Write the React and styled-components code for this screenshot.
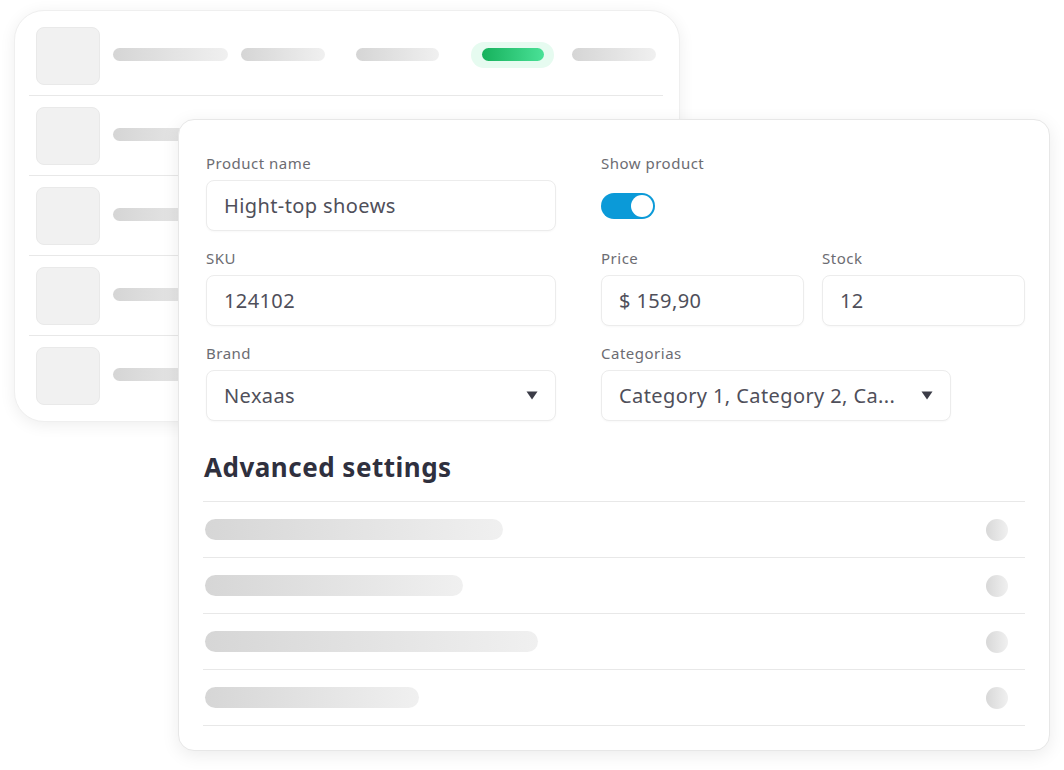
import { styled, createGlobalStyle } from "styled-components";

const GlobalStyle = createGlobalStyle`
    html, body {
        margin: 0;
        padding: 0;
        background: #ffffff;
        font-family: "Noto Sans", "Open Sans", sans-serif;
    }
`;

const tableRows = [0, 1, 2, 3, 4];
const settings = [298, 258, 333, 214];

function Caret() {
    return (
        <svg width="12" height="9" viewBox="0 0 12 9">
            <path d="M0.5 0.5 H11.5 L6 8.5 Z" fill="#3b3c47" />
        </svg>
    );
}

function App() {
    return (
        <>
            <GlobalStyle />
            <Stage>
                <TableCard>
                    {tableRows.map((r) => (
                        <TableRow key={r}>
                            <Thumb />
                            <Cells>
                                <Cell><Skeleton $w={115} /></Cell>
                                <Cell><Skeleton $w={84} /></Cell>
                                <Cell><Skeleton $w={83} /></Cell>
                                <Cell>
                                    <StatusGlow><StatusPill /></StatusGlow>
                                </Cell>
                                <Cell><Skeleton $w={84} /></Cell>
                            </Cells>
                        </TableRow>
                    ))}
                </TableCard>

                <FormCard>
                    <FormGrid>
                        <FormField>
                            <Label>Product name</Label>
                            <Input>Hight-top shoews</Input>
                        </FormField>
                        <FormField>
                            <Label>Show product</Label>
                            <ToggleWrap>
                                <Toggle><Knob /></Toggle>
                            </ToggleWrap>
                        </FormField>

                        <FormField>
                            <Label>SKU</Label>
                            <Input>124102</Input>
                        </FormField>
                        <Pair>
                            <FormField>
                                <Label>Price</Label>
                                <Input>$ 159,90</Input>
                            </FormField>
                            <FormField>
                                <Label>Stock</Label>
                                <Input>12</Input>
                            </FormField>
                        </Pair>

                        <FormField>
                            <Label>Brand</Label>
                            <Select>
                                <span>Nexaas</span>
                                <Caret />
                            </Select>
                        </FormField>
                        <FormField>
                            <Label>Categorias</Label>
                            <Select $w={350}>
                                <span>Category 1, Category 2, Ca...</span>
                                <Caret />
                            </Select>
                        </FormField>
                    </FormGrid>

                    <Heading>Advanced settings</Heading>
                    <SettingsList>
                        {settings.map((w, i) => (
                            <SettingRow key={i}>
                                <SettingBar $w={w} />
                                <Dot />
                            </SettingRow>
                        ))}
                    </SettingsList>
                </FormCard>
            </Stage>
        </>
    );
}

export default App;

const Stage = styled.div`
    position: relative;
    width: 1064px;
    height: 770px;
    padding: 10px 0 0 14px;
    box-sizing: border-box;
`;

const TableCard = styled.div`
    width: 666px;
    box-sizing: border-box;
    padding: 5px 16px 6px 14px;
    background: #ffffff;
    border: 1px solid #efefef;
    border-radius: 30px;
    box-shadow: 0 3px 16px rgba(0, 0, 0, 0.07);
`;

const TableRow = styled.div`
    display: flex;
    align-items: center;
    padding: 11px 0 10px 7px;
    border-bottom: 1px solid #e8e8e8;
    &:last-child {
        border-bottom: none;
    }
`;

const Thumb = styled.div`
    width: 64px;
    height: 58px;
    box-sizing: border-box;
    flex-shrink: 0;
    background: #f1f1f1;
    border: 1px solid #e9e9e9;
    border-radius: 8px;
`;

const Cells = styled.div`
    display: grid;
    grid-template-columns: 128px 115px 115px 101px 84px;
    align-items: center;
    margin-left: 13px;
    margin-top: -3px;
`;

const Cell = styled.div`
    display: flex;
    align-items: center;
`;

const Skeleton = styled.div`
    width: ${({ $w }) => $w}px;
    height: 13px;
    border-radius: 7px;
    background: linear-gradient(90deg, #d5d5d5, #f0f0f0);
`;

const StatusGlow = styled.div`
    width: 83px;
    height: 26px;
    border-radius: 13px;
    background: #e6fbf0;
    display: flex;
    align-items: center;
    justify-content: center;
`;

const StatusPill = styled.div`
    width: 62px;
    height: 13px;
    border-radius: 7px;
    background: linear-gradient(90deg, #16b15c, #4ae197);
`;

const FormCard = styled.div`
    position: absolute;
    left: 178px;
    top: 119px;
    width: 872px;
    box-sizing: border-box;
    padding: 34px 24px 24px 27px;
    background: #ffffff;
    border: 1px solid #e7e7e7;
    border-radius: 16px;
    box-shadow: 0 4px 18px rgba(0, 0, 0, 0.08);
`;

const FormGrid = styled.div`
    display: grid;
    grid-template-columns: 350px 1fr;
    column-gap: 45px;
    row-gap: 18px;
`;

const FormField = styled.div`
    display: flex;
    flex-direction: column;
    gap: 8px;
`;

const Pair = styled.div`
    display: grid;
    grid-template-columns: 1fr 1fr;
    column-gap: 18px;
`;

const Label = styled.div`
    font-size: 15px;
    line-height: 18px;
    letter-spacing: 0.5px;
    color: #6c6c72;
`;

const Input = styled.div`
    height: 51px;
    box-sizing: border-box;
    display: flex;
    align-items: center;
    padding: 0 17px;
    border: 1px solid #ececec;
    border-radius: 8px;
    background: #ffffff;
    box-shadow: 0 1px 2px rgba(0, 0, 0, 0.03);
    font-size: 20px;
    letter-spacing: 0.4px;
    color: #4f4f5a;
    white-space: nowrap;
`;

const Select = styled(Input)`
    justify-content: space-between;
    width: ${({ $w }) => ($w ? `${$w}px` : "auto")};
    padding-right: 17px;
`;

const ToggleWrap = styled.div`
    height: 51px;
    display: flex;
    align-items: center;
`;

const Toggle = styled.div`
    width: 54px;
    height: 26px;
    box-sizing: border-box;
    border-radius: 13px;
    background: #0b9ad8;
    display: flex;
    align-items: center;
    justify-content: flex-end;
    padding: 0 2px;
`;

const Knob = styled.div`
    width: 22px;
    height: 22px;
    border-radius: 50%;
    background: #ffffff;
`;

const Heading = styled.h2`
    margin: 31px 0 19px -2px;
    font-size: 26px;
    line-height: 30px;
    font-weight: 700;
    letter-spacing: 0.5px;
    color: #2f303e;
`;

const SettingsList = styled.div`
    margin-left: -3px;
    border-top: 1px solid #e8e8e8;
`;

const SettingRow = styled.div`
    height: 55px;
    display: flex;
    align-items: center;
    justify-content: space-between;
    padding: 0 17px 0 2px;
    border-bottom: 1px solid #e8e8e8;
`;

const SettingBar = styled.div`
    width: ${({ $w }) => $w}px;
    height: 21px;
    border-radius: 11px;
    background: linear-gradient(90deg, #d6d6d6, #f0f0f0);
`;

const Dot = styled.div`
    width: 22px;
    height: 22px;
    border-radius: 50%;
    background: linear-gradient(90deg, #d8d8d8, #f0f0f0);
`;
